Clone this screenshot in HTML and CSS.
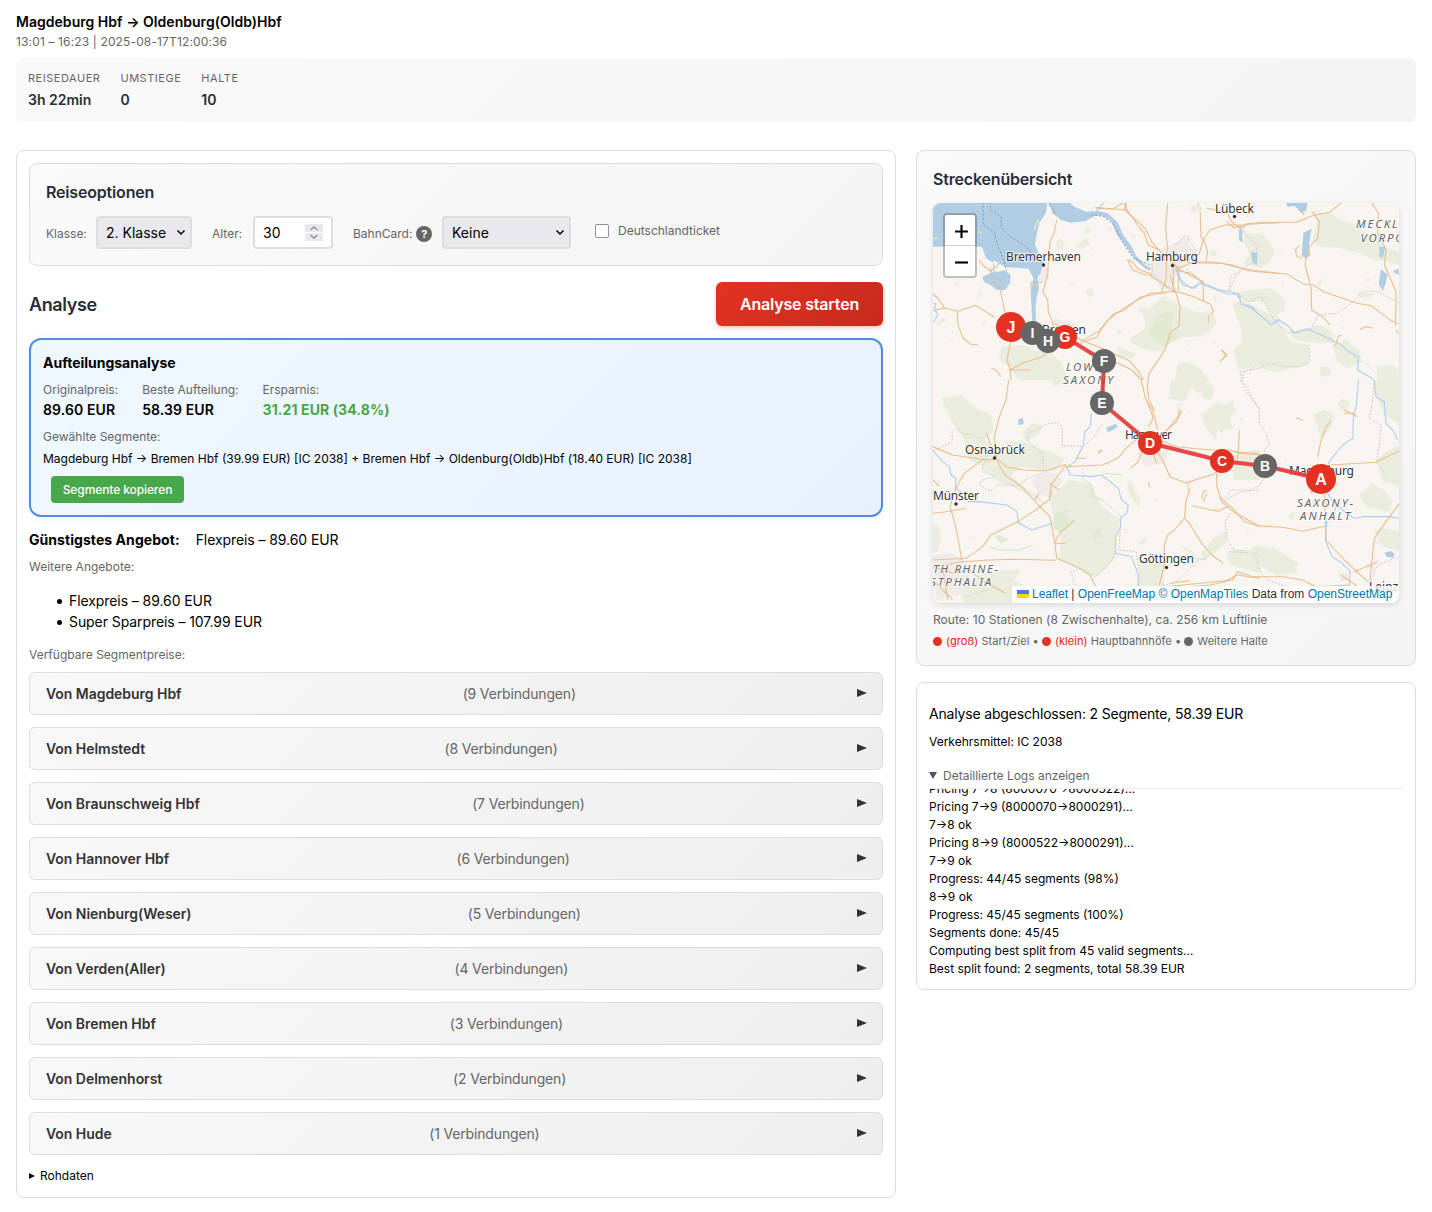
FILE: index.html
```html
<!DOCTYPE html>
<html lang="de">
<head>
<meta charset="utf-8">
<title>Magdeburg Hbf → Oldenburg(Oldb)Hbf</title>
<link rel="stylesheet" href="styles.css">
</head>
<body>
<header class="trip">
  <h1 class="trip-title">Magdeburg Hbf → Oldenburg(Oldb)Hbf</h1>
  <div class="trip-meta">13:01 – 16:23 | 2025-08-17T12:00:36</div>
  <div class="stats">
    <div class="stat"><span class="stat-label">Reisedauer</span><b>3h 22min</b></div>
    <div class="stat"><span class="stat-label">Umstiege</span><b>0</b></div>
    <div class="stat"><span class="stat-label">Halte</span><b>10</b></div>
  </div>
</header>
<main class="columns">
  <section class="card left">
    <div class="options">
      <h2 class="heading">Reiseoptionen</h2>
      <div class="fields">
        <label class="lbl lbl-class">Klasse:</label>
        <div class="control sel-class"><select><option>2. Klasse</option></select><svg class="chev" viewBox="0 0 10 7"><path d="M1.5 1.5 5 5 8.500 1.500"/></svg></div>
        <label class="lbl lbl-age">Alter:</label>
        <div class="control age"><input type="text" value="30"><div class="spin"><svg viewBox="0 0 18 8"><path d="M5.500 6 9 3 12.500 6"/></svg><svg viewBox="0 0 18 8"><path d="M5.500 2 9 5 12.500 2"/></svg></div></div>
        <label class="lbl lbl-card">BahnCard: <span class="help">?</span></label>
        <div class="control sel-card"><select><option>Keine</option></select><svg class="chev" viewBox="0 0 10 7"><path d="M1.500 1.500 5 5 8.500 1.500"/></svg></div>
        <label class="check"><span class="box"></span>Deutschlandticket</label>
      </div>
    </div>
    <div class="analysis-head"><h2 class="big-heading">Analyse</h2><button class="start">Analyse starten</button></div>
    <div class="result">
      <div class="result-title">Aufteilungsanalyse</div>
      <div class="prices">
        <div><span class="muted">Originalpreis:</span><b>89.60 EUR</b></div>
        <div><span class="muted">Beste Aufteilung:</span><b>58.39 EUR</b></div>
        <div><span class="muted">Ersparnis:</span><b class="saving">31.21 EUR (34.8%)</b></div>
      </div>
      <div class="muted">Gewählte Segmente:</div>
      <div class="chosen">Magdeburg Hbf → Bremen Hbf (39.99 EUR) [IC 2038] + Bremen Hbf → Oldenburg(Oldb)Hbf (18.40 EUR) [IC 2038]</div>
      <button class="copy">Segmente kopieren</button>
    </div>
    <div class="cheapest"><b>Günstigstes Angebot:</b><span>Flexpreis – 89.60 EUR</span></div>
    <div class="muted more">Weitere Angebote:</div>
    <ul class="offers"><li>Flexpreis – 89.60 EUR</li><li>Super Sparpreis – 107.99 EUR</li></ul>
    <div class="muted">Verfügbare Segmentpreise:</div>
    <div class="rows">
      <div class="row"><b>Von Magdeburg Hbf</b><span>(9 Verbindungen)</span><i class="tri"></i></div>
      <div class="row"><b>Von Helmstedt</b><span>(8 Verbindungen)</span><i class="tri"></i></div>
      <div class="row"><b>Von Braunschweig Hbf</b><span>(7 Verbindungen)</span><i class="tri"></i></div>
      <div class="row"><b>Von Hannover Hbf</b><span>(6 Verbindungen)</span><i class="tri"></i></div>
      <div class="row"><b>Von Nienburg(Weser)</b><span>(5 Verbindungen)</span><i class="tri"></i></div>
      <div class="row"><b>Von Verden(Aller)</b><span>(4 Verbindungen)</span><i class="tri"></i></div>
      <div class="row"><b>Von Bremen Hbf</b><span>(3 Verbindungen)</span><i class="tri"></i></div>
      <div class="row"><b>Von Delmenhorst</b><span>(2 Verbindungen)</span><i class="tri"></i></div>
      <div class="row"><b>Von Hude</b><span>(1 Verbindungen)</span><i class="tri"></i></div>
    </div>
    <div class="raw"><i class="tri-small"></i>Rohdaten</div>
  </section>
  <aside class="right">
    <section class="card map-card">
      <h2 class="heading">Streckenübersicht</h2>
      <div class="map">
        <svg class="map-svg" viewBox="933 203 466 400" width="466" height="400">
          <rect x="933" y="203" width="466" height="400" fill="#f8f4f0"/>
          <!-- north-west coast -->
          <g transform="translate(916 150) scale(.33333)">
            <path class="wood" d="M740 440l-35 30-25 15 10 25-5 30-40 20-5 15 50 25 60 5V440zM420 275l15-10 12 15-8 20-15-5zM480 290l20-20 15-5 5 20-25 12zM505 240l15-8 5 15-12 8zM180 450l10-30 5 15zM255 590l70-5 25 15 55 10 30 25 20 55H310l-30-40-30-20zM60 520l20-15 20 5-15 5-20 15zM600 590l60 20-10 15-40-5z"/>
            <path class="town" d="M365 365l20-20 12 10 2 20-20 20-12-5zM110 400l20-5-5 15zM300 300l20-5-5 15zM340 480l30 10-12 10zM460 400l15-5 2 12zM570 230l20 0-5 15zM640 250l20 8-10 10zM510 420l20-8 3 12-20 4zM195 520l12-10 6 14zM415 505l60 15 10 25-40 10-40-30zM100 560l14 8-10 6z"/>
            <path class="water" d="M50 155H395l10 20 5 15 25 20 30 8 45-5 30-17 20 1 25 15 20 45 35 45 20 30 30 25 30 10v-8l-30-12-30-30-15-30-25-35-15-35-30-27-30-7-35 2-35-15-25-22H395l-5 40-20 30-8 35-5 30 20 50 12 10-10 5-5 20-10 15 5 30-8 35-3 35 2 30 25 25 80 20v5l-90-18-26-28-2-45-3-38 8-50-14-28-70-5-35-20-2 25 10 10 25-5 18 14-2 25-15 20-25 0-18-15-20-10-5-15 35-15 1-25-25-15-10-30-5-5H50z"/>
            <path class="isle" d="M50 266l16-3M90 267l16-6M145 250l20-5M185 245l12 3M355 240l4-15 8-15"/>
            <path class="ferry" d="M201 155l1 70 32 20 10 38 20 50 8 30M220 155l5 25 30 20 2 35 25 25 40 25 35 30 22 22M395 155l25 40M525 195l35 3 30 22 20 38 18 32 25 35 45 18 50 8"/>
            <path class="road" d="M190 330l10 15 25 20 25-25M225 355l3 35 25 30 12 60 5 15M50 430l20 20 16 25M50 482l36-8 38 10 55-18 55 35M124 484l2 40 15 40 25 20h20M285 570l-12 60 10 30 2 30M422 210l-8 40-12 25-5 60-2 40-14 50 14 25 2 35 18 45 22 25M345 397h35M345 397v25M415 520l60 40 25 12 50-30 30-35 25-20 55-35 45-23h45M500 572l50 20 90 40 30 35 12 23M540 175l50 2 38-22M628 155l2 20 35 50 20 25 12 35 45 20M635 330l15 30 40 15h30M400 605l-20 15-60 20-40 20h60M225 655l15 5 15 20"/>
            <path class="river" d="M50 460l10 2-5 15 10 15-6 15-9 10M540 185l25-30"/>
          </g>
          <!-- Hamburg and Lüneburg Heath -->
          <g transform="translate(1080 200) scale(.33333)">
            <path class="wood" d="M205 325l65-25 40 20 40 15 50 5 10 25-20 30-35 15-45 2-50 20-10 20-60-10-18-12 10-30 20-15-15-45-15-15zM275 580l20-90 25-5 40 20 20 25 25 45-15 25-20-5-10-30-30-12-20 30zM385 155l15-7 14 10-14 8zM20 280l14-12 8 15-14 10zM460 310l50 40-5 45-22 20 30 80 40-10 47 30V360l-110-60z"/>
            <path class="wood2" d="M230 350l35-20 15 15-8 45 25 20-40 30-30-15-22-20z"/>
            <path class="town" d="M215 180l35-40 30-5 25-20 22 0-3 20 20 15-8 20-35 18 10 30-25 12-10 30-30 10-20-30-20-5zM110 392l12-5 4 10-12 8zM355 395l15 10-6 8zM395 430l10-10 3 15zM200 540l12-2-3 12zM180 55l12 5-4 15zM30 140l12 5-6 8z"/>
            <path class="border" d="M280 135l20-8 10-15 15-2 3 15 20 25-8 20M480 75l5 20 40 30 12 25-8 35-30 10-22 20-25 15-5 45M215 190l5 35 35 25 10 20 25-25M320 205l45 45M470 285l45 20 45-15 20 50 20 20M600 488l-60 5-50 25-2 25 30 50 20 37"/>
            <path class="river" d="M285 200l15 40 35 25 30-18 45 20 60 13 15 30 30 10 55 55 30-15"/>
            <path class="road" d="M45 22l90 8 5-20M135 10v20l60 55 20 40 35 40 10 25M263 10l-6 70 5 60-4 100-15 40M352 10l8 10 3 90 10 15 10 30-5 30M485 75l-50 0-45 15-20 30-12 40-25 30-40 15M600 68l-95 5-25 12-25-20-15-30-60-10M295 185l110 2 50 8 55 18 90 8M280 195v80M295 200v70M285 210l50 10 35 30v55M270 225l15 50M0 430l50-18 20-35 30-35 30-10 50-40 80-17 35 0 50 17 45 20 10 20-15 20v15M285 270l15 50-3 60-25 15-15 50-25 40-25 35-5 40 5 40 16 30M95 480l60 30 30 30M300 210l70 35M425 450l15 15-20 20M140 180l15 3 20 25 40 15M210 225l80 55M270 180l30 30"/>
          </g>
          <!-- Mecklenburg -->
          <g transform="translate(1166 150) scale(.33333)">
            <path class="wood" d="M235 250l50 0 20 20 22 35-20 35-20 15-55-15 20-30-20-35zM470 195l20-8 30 20 40 15 35 25 40 10 20 35 45 12v40l-75-15-60-25-50-10-65-5-10-20 15-60zM215 425l100-10 45 35-5 30-30 20-30-40-30-10-20 5zM365 545l50-10 50-10 35 20 5 35-45 0-70-10zM500 585l40-15 40 30 10 35-45 20-35-25zM200 465l25-10 120 70 30 50 55 10-5 60-100 20-55-15-50 10-20-60 35-30-20-60zM630 650l50-5 20 20v25h-65zM460 650l30 0 5 25-30 5zM130 310l20-5 5 10-20 5zM575 430l50-2-10 15-35 2zM455 400l10-15 4 12-12 15zM140 440l5-5 8 20-5 5z"/>
            <path class="town" d="M70 170l30-5 5 20-25 2zM335 300l18-5-3 12zM435 185l30-5 5 20-20 8zM590 390l22-5 2 12zM350 400l5 15-10-12zM515 535l15-8 4 10zM110 485l20-5 8 15-20 5zM60 600l15 2-10 8zM480 235l12 5-8 8z"/>
            <path class="water" d="M360 159h65l-5 25-15 3-20-20-20 5zM412 248l25-12-8 45 3 35-10 10-15-8 2-30zM218 240l10-5 2 42-10-5zM255 305l20 5-2 38-15-15zM640 290l18 0-8 35-10-5zM645 358l20 15-5 25-10 25-12-20zM680 365l18-10v20z"/>
            <path class="border" d="M230 230l5 20 38 35-2 45-35 25-28 25-20 50M215 430l30 25 40-15 45 80 40 30 65-10 20-45 60-5 35-25 40-40 40-2 70 35M430 595v40l-30 15-40 0-45-10-35 15-55 10v30M600 640l20 20"/>
            <path class="river" d="M30 350l20 55 35 10 15-15 85 32 33 0 8 30 30 12 60 50 20-15 25 15 25 25 40-12 45 20 50 25 30 25 25 15 0 40M575 660l48 28"/>
            <path class="road" d="M525 159l-35 28-50 10-25 10-25 10-100 0-50 5-35 12-25-20M617 159l20 30-2 60 25 50-5 45 35 80-1 95-1 10M689 540l10 12M440 185l20 30-5 50-30 30-8 50 15 55M65 338l100 2 75 18 125 15 45 28 35 5 30 20 95 33 45 8 60 45 40 15 10 15M435 405l2 75 35 22 20 22M400 287l-12 12 5 20 14 6M528 557h-10l-8 25-8 5M582 538l18-8 20 5M165 600l15 15-15 18M400 180l15 15"/>
          </g>
          <!-- Osnabrück, Münster -->
          <g transform="translate(916 380) scale(.33333)">
            <path class="wood" d="M75 55l60-10 45 40 45 20 10 50-30 20 20 30 60 20-20-45 50 5 100 35 30 20-30 35-100-15-30 25 35 35 50 30 20 25-70-40-70-30-50-45-40-20-15-60-40-60zM50 430l20 10 5 30-10 45H50zM125 625l100-55 90 0-20 30 40 25-20 44H145zM400 355l60-55 65 10 30 65 55 45-15 80 5 35-60 55-110-50 5-80-20-45zM320 155l30-25 30 5-5 20-45 30zM410 20l60-20h-60zM670 560l75-10v70h-75zM635 300l15 10 15 70-15-30z"/>
            <path class="wood2" d="M415 400l40-10 5 50-30 20-20-20zM530 460l20-15 8 20-20 15zM235 470l15-5 30 15-25 10z"/>
            <path class="town" d="M345 300l40-25 40 5 15 25-40 45-35-10zM230 235l30-2 5 25-30 5zM110 365l20 0-4 20zM50 525l60-5 30 20 20 40-10 60-90 20zM160 470l20-3-2 10zM440 400l20-5-2 12zM150 100l20 3-10 8zM560 250l20-5 5 12zM540 60l12 6-8 7zM620 450l15-5-2 15zM300 430l20-5 4 15z"/>
            <path class="water" d="M307 118l14-4 2 18-15 4zM570 143l30-12 5 10-28 16z"/>
            <path class="border" d="M50 210l20-5 40-20-3-30 15-10 25 20 25-5 10 15 35-5 5 40-25 60 40 20-40 10-5 15 30 20 25-20 60 0 30-20 45-15-2-60-25-20-20-15 3-25 60-30 30-2 12 20-2 50 65 0 30-25 25-40M500 265v30l25 20 5 35 30 10 55 50-5 90-35 60-40 30-40-25-30 10 10 35 35 40M610 510l50 5 10 50"/>
            <path class="river" d="M50 210l30 35 20 15 5 25 15 10-2 30 30 20 10 20 30 0 85 10 30 20 5 35 40 20 60-20M527 100l-5 40-15 15-5 40-25 50-25 15 10 25 65 5 30-5 50 40 10 35 20 15-5 25-20 15 2 25-15 30-2 50 50 10 20 55v45"/>
            <path class="road" d="M278 0l-8 60-20 50-15 60 7 65 28 25 50 10 70 3 60-20M560 255l45-20 25-30 40-35M450 260l110-5M50 200l60 25 100 15 30-2M210 158l30 75M242 240l25 45 50 35 50 55 35 35 15 80 5 45 60 25 40 25 30 60M50 300l20 18M205 235l-60 45-25 45-18 55 15 50 10 50 10 60M50 400l40-5 60-10M375 380l-70 45-80 40-25 35-50 35-100 5M50 560l90-15 80-5 80-2 120 3M450 255l-45 60-5 45-30 20M400 310l30 20M355 360l15-20M410 335l-10 20M475 420l-20 20-20 15-20 35h35M675 0l15 60 20 30 15 60M50 560l60 20 50-10 50 40 60 30M50 600l60 60M80 560l15 100M545 220l15-10M480 235h30"/>
            <path class="lane" d="M220 500l30 10h60l40-15M560 280l60 5M150 650l80-25"/>
          </g>
          <!-- Hannover, Göttingen -->
          <g transform="translate(1060 400) scale(.33333)">
            <path class="wood" d="M200 250l12-4 30 60-5 15-25-30zM520 165l65-15 15 0v90h-75l-10-30zM420 465l40-50 45-25-5 35-35 35-30 20zM500 455l50-5 50 20v50l-90-25zM235 480l60-10 10 60-20 30h-45zM235 430l20-15 10 10-20 10z"/>
            <path class="town" d="M235 120l70-10 20 40-10 40-60 10-15-30zM320 220l15-2-2 18zM375 240l20 0-5 20zM470 210l15 2-5 20zM295 530l20 5-5 15zM460 320l15 3-6 12zM380 30l15 5-8 8zM280 300l15-5-2 12z"/>
            <path class="border" d="M495 300l50-25 55-5M510 340l-15 25 5 50 20 35 55 5 25 15M435 475l-20 5-30 30-35 35-50 15"/>
            <path class="road" d="M265 80l15-25-20-55M365 30l-15 35-35 30-10 25M300 120l50 20 100 10 60 0 30 10 60 5M290 150l25 45 15 35 50 20 8 20-10 35-5 50-30 35-20 15-10 30 0 60-15 60M380 250l30-12 50-15 20-15M470 215l0 40 15 50 35 30 80 45M375 355l20 25 30 50 30 35 35 25M395 317l80 17 30-15M440 270l-10 5-5 20M430 305l10-25M265 248l5 15M245 155l-10 30-25 20M485 70v25M538 90l-2 50-4 40M120 150l-5 10M265 120l25 70M390 560l60-5 45-10 35-20 70 10M330 550l60-8"/>
            <path class="lane" d="M365 440l30 15 10 20 35 5"/>
          </g>
          <!-- Magdeburg -->
          <g transform="translate(1166 380) scale(.33333)">
            <path class="wood" d="M15 0h85l20 25-20 15-25-15-20 40-45-10zM105 105l50-40 20 10 25-15 10 35-20 15 10 35-45 5-5 30-30-35zM440 105l35-15 30 15-10 35-30 40-10-40zM515 70l15-15 20 15-5 20-20 3zM620 0h80v130l-45-25-20-45zM630 240l30-25 40-20v125l-50-20zM580 345l40-35 40 25 20 30-10 30-70-15zM265 495l70 15 60 40-5 30-60 5-50-30-45-10zM190 520l60-8 25 40-30 15-45-30zM365 410l15-15 10 5-10 20zM625 450l30-5 45 10v60l-60-20z"/>
            <path class="town" d="M30 70l20 0-10 20zM425 260l50-5 10 60-25 20-30-20zM60 310l15 2-8 12zM235 450l18-5-2 12zM520 580l30 0-3 20-25 5zM600 560l25-5 0 20zM490 300l30 10-15 15zM315 500l12 4-8 8zM220 110l15 5-8 10zM350 240l15-4-4 14zM625 480l15 5-10 8z"/>
            <path class="water" d="M656 518l18-5 12 8-5 12-20-3z"/>
            <path class="border" d="M225 0l15 35 40 50 0 45 20 30 10 30-15 20 2 70-15 35-30 15h-60l-10 20M190 515l75 5 20 60 20 20 70 25M625 0l-5 60-10 55 35 20-5 60-10 50 30 35M615 600l20-45 65-25"/>
            <path class="river" d="M577 0l-5 70-10 45-2 60-30 20-40 50-25 80 20 15 20 30 25 20 35 25 25-5 80 0 30 5M483 425l-5 55 20 50 25 15 30 30-5 60M510 380l-10 30-20 20M625 0l5 50 25 15 5 65 20 20 15 30"/>
            <path class="road" d="M40 88l-2 20-38 45M200 215l70 5 40 15M235 425l40 12 75 5 60 12 65-15M450 275l-5 30-10 35M495 122l-15 20-15 40-10 50M490 255l140-8 70-35M475 310l5 170 55 60 70 65M700 370l-40 55-35 50-10 95-5 50M565 575l70-30M535 90l40 20M535 100h30M390 115l10 0 10 8M160 350l45 40 30 35M0 620l200-20 15-25 45 15 90 0 60 10 40 20 100-5M525 585l50 35"/>
          </g>
          <g class="city">
            <text x="1215" y="213" textLength="39">Lübeck</text><text x="1006" y="261" textLength="75">Bremerhaven</text><text x="1146" y="261" textLength="52">Hamburg</text><text x="1042" y="333.500" textLength="44">Bremen</text><text x="965" y="454" textLength="60">Osnabrück</text><text x="933" y="500" textLength="46">Münster</text><text x="1125" y="438.500" textLength="47">Hannover</text><text x="1139" y="563" textLength="55">Göttingen</text><text x="1289" y="474.500" textLength="65">Magdeburg</text><text x="1369" y="590.500">Leipzig</text>
          </g>
          <g class="region">
            <text x="1356" y="228">MECKLENBURG-</text><text x="1360.500" y="241.500">VORPOMMERN</text><text x="1066" y="370.500">LOWER</text><text x="1063" y="384" textLength="52">SAXONY</text><text x="1297" y="506.500" textLength="58">SAXONY-</text><text x="1300" y="520" textLength="52">ANHALT</text><text x="933" y="572.500" textLength="67">TH RHINE-</text><text x="930" y="586" textLength="63">STPHALIA</text>
          </g>
          <g fill="#333"><circle cx="1234.500" cy="216.500" r="1.700"/><circle cx="1043.500" cy="265" r="1.700"/><circle cx="1172.500" cy="265.500" r="1.700"/><circle cx="994.500" cy="458" r="1.700"/><circle cx="956" cy="504" r="1.700"/><circle cx="1166.500" cy="567.500" r="1.700"/></g>
          <path class="route" d="M1321 479 1265 466 1222 461 1150 443 1102 403 1104 361 1065 337 1048 341 1032 333 1011 327"/>
          <g class="pins">
            <circle class="main" cx="1065" cy="337" r="12"/><text x="1065" y="342">G</text>
            <circle class="main" cx="1011" cy="327" r="15"/><text class="end" x="1011" y="332.700">J</text>
            <circle cx="1032.500" cy="333" r="12"/><text x="1032.500" y="338">I</text>
            <circle cx="1048" cy="341" r="12"/><text x="1048" y="346">H</text>
            <circle cx="1104" cy="361" r="12"/><text x="1104" y="366">F</text>
            <circle cx="1102" cy="403" r="12"/><text x="1102" y="408">E</text>
            <circle class="main" cx="1150" cy="443" r="12"/><text x="1150" y="448">D</text>
            <circle class="main" cx="1222" cy="461" r="12"/><text x="1222" y="466">C</text>
            <circle cx="1265" cy="466" r="12"/><text x="1265" y="471">B</text>
            <circle class="main" cx="1321" cy="479" r="15"/><text class="end" x="1321" y="484.700">A</text>
          </g>
        </svg>
        <div class="zoom"><span><svg viewBox="0 0 14 14"><path d="M1 7h12M7 1v12"/></svg></span><span><svg viewBox="0 0 14 14"><path d="M1 7h12"/></svg></span></div>
        <div class="attribution"><i class="flag"></i><a>Leaflet</a> | <a>OpenFreeMap</a> <a>© OpenMapTiles</a> Data from <a>OpenStreetMap</a></div>
      </div>
      <div class="route-info">Route: 10 Stationen (8 Zwischenhalte), ca. 256 km Luftlinie</div>
      <div class="legend"><i class="dot red"></i><em>(groß)</em> Start/Ziel • <i class="dot red"></i><em>(klein)</em> Hauptbahnhöfe • <i class="dot"></i>Weitere Halte</div>
    </section>
    <section class="card log-card">
      <div class="status">Analyse abgeschlossen: 2 Segmente, 58.39 EUR</div>
      <div class="vehicle">Verkehrsmittel: IC 2038</div>
      <div class="log-toggle"><i class="tri-down"></i>Detaillierte Logs anzeigen</div>
      <div class="log">
        <div>Pricing 7→8 (8000070→8000522)…</div><div>Pricing 7→9 (8000070→8000291)…</div><div>7→8 ok</div><div>Pricing 8→9 (8000522→8000291)…</div><div>7→9 ok</div><div>Progress: 44/45 segments (98%)</div><div>8→9 ok</div><div>Progress: 45/45 segments (100%)</div><div>Segments done: 45/45</div><div>Computing best split from 45 valid segments…</div><div>Best split found: 2 segments, total 58.39 EUR</div>
      </div>
    </section>
  </aside>
</main>
</body>
</html>
```
FILE: styles.css
```css
* { box-sizing: border-box; }
body { margin: 0; padding: 11px 16px 14px; background: #fff; color: #000; font: 14px/21px Inter, "Liberation Sans", sans-serif; }
h1, h2 { margin: 0; }
b { font-weight: 600; }
.trip-title { font-size: 14px; line-height: 21px; font-weight: 600; letter-spacing: .03px; }
.trip-meta { font-size: 12px; line-height: 18px; color: #666; margin-top: 1px; letter-spacing: .14px; }
.stats { display: flex; gap: 20px; height: 64px; margin-top: 7px; padding: 11px 12px; border-radius: 6px; background: linear-gradient(135deg, #f9f9f9, #f4f4f4); color: #282d37; }
.stat { display: flex; flex-direction: column; }
.stat b { line-height: 21px; margin-top: 2px; }
.stat-label { font-size: 11px; line-height: 18px; letter-spacing: .53px; text-transform: uppercase; color: #666; }
.columns { display: grid; grid-template-columns: 880px 500px; gap: 20px; margin-top: 28px; align-items: start; }
.card { border: 1px solid #ddd; border-radius: 8px; background: #fff; }
.left { padding: 12px; height: 1048px; }
.options { height: 103px; padding: 16px; border: 1px solid #ddd; border-radius: 8px; background: linear-gradient(135deg, #fafafa, #f4f4f4); }
.heading { font-size: 16px; line-height: 24px; font-weight: 600; letter-spacing: -.18px; color: #282d37; }
.fields { display: flex; align-items: center; height: 33px; margin-top: 12px; }
.lbl { font-size: 12px; color: #666; display: flex; align-items: center; padding-top: 2px; }
.lbl-class { width: 50px; }
.lbl-age { width: 41px; margin-left: 20px; }
.lbl-card { width: 89px; margin-left: 20px; gap: 4px; white-space: nowrap; }
.help { width: 16px; height: 16px; border-radius: 50%; background: #666; color: #fff; font-size: 11px; line-height: 16px; font-weight: 700; text-align: center; }
.control { position: relative; height: 33px; }
.control select, .control input { appearance: none; width: 100%; height: 33px; border: 2px solid #ddd; border-radius: 4px; padding: 0 8px; background: #e9e9ed; color: #000; font: 14px/21px Inter, sans-serif; }
.control input { background: #fff; }
.sel-class { width: 96px; }
.age { width: 80px; }
.sel-card { width: 129px; }
.chev { position: absolute; right: 6px; top: 13px; width: 10px; height: 7px; fill: none; stroke: #000; stroke-width: 1.5; }
.spin { position: absolute; right: 10px; top: 8px; width: 18px; display: grid; gap: 1px; }
.spin svg { display: block; width: 18px; height: 8px; background: #e9e9ed; fill: none; stroke: #8f8f9d; stroke-width: 1.4; }
.check { display: flex; align-items: center; gap: 9px; margin-left: 24px; margin-top: -4px; font-size: 12px; color: #666; }
.box { width: 14px; height: 14px; border: 1px solid #8f8f9d; border-radius: 2px; background: #fff; }
.analysis-head { display: flex; justify-content: space-between; align-items: center; height: 44px; margin: 16px 0 12px; }
.big-heading { font-size: 18px; line-height: 27px; font-weight: 600; letter-spacing: -.4px; color: #282d37; }
.start { width: 167px; height: 44px; border: 0; border-radius: 6px; background: linear-gradient(135deg, #e33222, #c52b1d); color: #fff; font: 600 16px/24px Inter, sans-serif; letter-spacing: -.17px; box-shadow: 0 2px 4px rgba(227, 50, 34, .3); padding: 0; }
.result { height: 179px; padding: 12px; border: 2px solid #528cdf; border-radius: 12px; background: linear-gradient(135deg, #f0f8ff, #e8f0fe); box-shadow: 0 2px 8px rgba(82, 140, 223, .13); }
.result-title { font-weight: 700; letter-spacing: -.01px; }
.muted { font-size: 12px; line-height: 18px; color: #666; }
.prices { display: flex; gap: 24px; margin: 8px 0; }
.prices div { display: flex; flex-direction: column; }
.prices b { letter-spacing: .1px; }
.prices .saving { color: #46a64a; font-weight: 700; }
.chosen { font-size: 12px; line-height: 18px; margin-top: 4px; }
.copy { display: block; width: 133px; height: 27px; margin: 8px 0 0 8px; padding: 0; border: 0; border-radius: 4px; background: #47a74b; color: #fff; font: 500 12px/18px Inter, sans-serif; letter-spacing: -.1px; }
.cheapest { display: flex; gap: 16px; margin-top: 12px; }
.cheapest b { font-weight: 700; letter-spacing: .06px; }
.cheapest span, .offers li, .row span { letter-spacing: -.08px; }
.more { margin-top: 8px; }
.offers { margin: 14px 0; padding-left: 40px; list-style: none; }
.offers li { display: flex; align-items: center; }
.offers li::before { content: ""; width: 5px; height: 5px; margin: 2px 7px 0 -12px; border-radius: 50%; background: #000; }
.rows { display: grid; gap: 12px; margin-top: 8px; }
.row { display: flex; justify-content: space-between; align-items: center; height: 43px; padding: 0 15px 0 16px; border: 1px solid #ddd; border-radius: 6px; background: linear-gradient(135deg, #f8f8f8, #eee); color: #666; }
.row span { letter-spacing: -.16px; }
.row b { color: #333; letter-spacing: -.04px; }
.tri { width: 0; height: 0; margin: -1px 0 0; border-left: 10px solid #333; border-top: 4px solid transparent; border-bottom: 4px solid transparent; }
.raw { display: flex; align-items: center; gap: 5px; margin-top: 12px; font-size: 12px; line-height: 18px; }
.tri-small { border-left: 6px solid #111; border-top: 3px solid transparent; border-bottom: 3px solid transparent; }
.right { display: grid; gap: 16px; }
.map-card { height: 516px; padding: 16px; background: linear-gradient(135deg, #fafafa, #f4f4f4); }
.map { position: relative; height: 400px; margin-top: 12px; border-radius: 8px; overflow: hidden; box-shadow: 0 2px 6px rgba(0, 0, 0, .12); }
.map-svg { display: block; }
.wood { fill: #eaeddd; }
.wood2 { fill: #dfead1; }
.town { fill: #f0ebe7; }
.water { fill: #b1cde3; }
.isle, .ferry, .border, .river, .road, .lane, .route { fill: none; }
.isle { stroke: #e1e5bb; stroke-width: 5; }
.ferry { stroke: #74a4c2; stroke-width: 3; stroke-dasharray: 7 5; }
.border { stroke: #cfcbcd; stroke-width: 3; stroke-dasharray: 6 4; stroke-linejoin: round; }
.river { stroke: #b0cdf0; stroke-width: 3.3; stroke-linejoin: round; }
.road { stroke: #e8bd8e; stroke-width: 3.2; stroke-linejoin: round; }
.lane { stroke: #d9e3c3; stroke-width: 3; }
.city text, .region text { paint-order: stroke; stroke: rgba(255, 255, 255, .8); stroke-width: 2px; font-family: "Noto Sans", sans-serif; }
.city text { fill: #333; font-size: 12px; }
.region text { fill: #666; font-size: 11.5px; font-style: italic; letter-spacing: 1.8px; }
.route { stroke: #e33b3b; stroke-width: 4; stroke-linejoin: round; opacity: .93; }
.pins circle { fill: #666; }
.pins .main { fill: #e33222; }
.pins text { fill: #fff; font: 700 14px "Liberation Sans", sans-serif; text-anchor: middle; }
.pins .end { font-size: 16px; }
.zoom { position: absolute; left: 10px; top: 10px; width: 34px; height: 65px; border: 2px solid rgba(0, 0, 0, .22); border-radius: 4px; background: #fff; background-clip: padding-box; }
.zoom span { display: flex; align-items: center; justify-content: center; height: 31px; padding: 3px 0 0 2px; border-bottom: 1px solid #ccc; }
.zoom span + span { border: 0; height: 30px; }
.zoom svg { width: 15px; height: 15px; stroke: #000; stroke-width: 2; }
.attribution { position: absolute; right: 0; bottom: 0; width: 387px; height: 17px; padding-left: 5px; background: rgba(255, 255, 255, .8); color: #333; font: 12px/17px "Liberation Sans", sans-serif; white-space: nowrap; }
.attribution a { color: #0078a8; }
.flag { display: inline-block; width: 12px; height: 8px; margin-right: 3px; background: linear-gradient(#4c7be1 50%, #ffd500 50%); }
.route-info { font-size: 12px; line-height: 18px; color: #666; margin-top: 8px; letter-spacing: .04px; }
.legend { margin-top: 4px; font-size: 11px; line-height: 16px; color: #666; white-space: nowrap; letter-spacing: .05px; }
.legend em { color: #e02420; font-style: normal; }
.dot { display: inline-block; width: 9px; height: 9px; margin-right: 4px; border-radius: 50%; background: #666; vertical-align: -1px; }
.dot.red { background: #e33222; }
.log-card { height: 308px; padding: 20px 12px 12px; }
.status { letter-spacing: -.17px; }
.vehicle { font-size: 12px; line-height: 18px; margin-top: 9px; }
.log-toggle { display: flex; align-items: center; gap: 6px; height: 22px; margin-top: 16px; padding-bottom: 4px; border-bottom: 1px solid #eee; font-size: 12px; line-height: 18px; color: #666; }
.tri-down { border-top: 7px solid #555; border-left: 4px solid transparent; border-right: 4px solid transparent; }
.log { display: flex; flex-direction: column; justify-content: flex-end; height: 189px; overflow: hidden; font-size: 12px; line-height: 18px; }
.log div { flex: none; }
```
